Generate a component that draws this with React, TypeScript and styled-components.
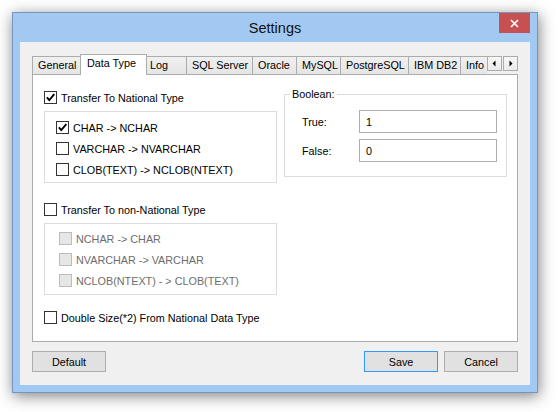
import React from 'react';
import styled, { createGlobalStyle, css } from 'styled-components';

const GlobalStyle = createGlobalStyle`
  html, body {
    margin: 0;
    padding: 0;
    background: #fff;
  }
  body {
    font-family: 'Liberation Sans', Arial, sans-serif;
    font-size: 10.8px;
    color: #000;
  }
  #root {
    width: 558px;
    height: 412px;
    overflow: hidden;
  }
`;

const Page = styled.div`
  padding: 12px 0 0 12px;
`;

const Window = styled.div`
  width: 526px;
  box-sizing: border-box;
  border: 1px solid #7596c0;
  background: #a2c9f2;
  padding: 0 7px 7px;
  box-shadow: 1px 3px 14px rgba(0, 0, 0, 0.5);
`;

const TitleBar = styled.div`
  display: grid;
  grid-template-columns: 1fr auto 1fr;
  height: 29px;
`;

const Title = styled.div`
  grid-column: 2;
  align-self: center;
  font-size: 14.5px;
  color: #111;
`;

const CloseButton = styled.div`
  grid-column: 3;
  justify-self: end;
  width: 31px;
  height: 20px;
  background: #c75050;
  display: flex;
  align-items: center;
  justify-content: center;
`;

const Client = styled.div`
  box-sizing: border-box;
  height: 343px;
  background: #f0f0f0;
  padding: 12px 12px 13px;
`;

const TabRow = styled.div`
  display: flex;
  height: 21px;
  position: relative;
  z-index: 1;
`;

const TabList = styled.div`
  width: 455px;
  flex: none;
  display: flex;
  align-items: flex-end;
  overflow: hidden;
`;

const Tab = styled.div<{ $width: number; $active?: boolean; $first?: boolean }>`
  box-sizing: border-box;
  flex: none;
  width: ${(p) => p.$width}px;
  height: 18px;
  margin-bottom: 1px;
  margin-left: ${(p) => (p.$first ? 0 : -1)}px;
  border: 1px solid #acacac;
  border-bottom: none;
  background: linear-gradient(#f0f0f0, #e5e5e5);
  padding-left: 5px;
  line-height: 17px;
  white-space: nowrap;

  ${(p) =>
    p.$active &&
    css`
      position: relative;
      z-index: 1;
      width: ${p.$width + 4}px;
      height: 21px;
      margin-bottom: 0;
      margin-left: -3px;
      margin-right: -2px;
      background: #fff;
      padding-left: 6px;
    `}
`;

const Arrows = styled.div`
  display: flex;
  gap: 1px;
  margin-top: 2px;
  height: 15px;
`;

const ArrowButton = styled.div`
  box-sizing: border-box;
  width: 15px;
  height: 15px;
  border: 1px solid #acacac;
  background: linear-gradient(#f7f7f7, #ebebeb);
  display: flex;
  align-items: center;
  justify-content: center;
`;

const Panel = styled.div`
  box-sizing: border-box;
  height: 268px;
  margin-top: -1px;
  background: #fff;
  border: 1px solid #acacac;
  display: flex;
  align-items: flex-start;
  gap: 7px;
  padding-left: 11px;
`;

const LeftColumn = styled.div`
  width: 233px;
  flex: none;
  display: flex;
  flex-direction: column;
  padding-top: 14px;
`;

const CheckRow = styled.label<{ $height?: number; $top?: number; $disabled?: boolean }>`
  display: flex;
  align-items: center;
  gap: 4px;
  height: ${(p) => p.$height ?? 17}px;
  margin-top: ${(p) => p.$top ?? 0}px;
  color: ${(p) => (p.$disabled ? '#6d6d6d' : '#000')};
  white-space: nowrap;
`;

const Box = styled.span<{ $disabled?: boolean }>`
  box-sizing: border-box;
  flex: none;
  width: 13px;
  height: 13px;
  border: 1px solid ${(p) => (p.$disabled ? '#bcbcbc' : '#333')};
  background: ${(p) => (p.$disabled ? '#e6e6e6' : '#fff')};
  display: flex;
  align-items: center;
  justify-content: center;
`;

const Group = styled.div<{ $padTop: number; $padLeft: number; $padBottom: number }>`
  margin-top: 5px;
  border: 1px solid #dcdcdc;
  padding: ${(p) => `${p.$padTop}px 0 ${p.$padBottom}px ${p.$padLeft}px`};
  display: flex;
  flex-direction: column;
`;

const Fieldset = styled.fieldset`
  width: 223px;
  box-sizing: border-box;
  flex: none;
  margin: 12px 0 0;
  padding: 0;
  border: 1px solid #dcdcdc;
  min-inline-size: 0;
`;

const Legend = styled.legend`
  margin-left: 5px;
  padding: 0 2px;
  line-height: 14px;
`;

const FieldGrid = styled.div`
  display: grid;
  grid-template-columns: 57px 138px;
  row-gap: 6px;
  align-items: center;
  padding: 9px 9px 14px 17px;
`;

const Input = styled.input`
  box-sizing: border-box;
  width: 138px;
  height: 23px;
  border: 1px solid #abadb3;
  padding: 0 6px;
  margin: 0;
  font: inherit;
  color: #000;
  background: #fff;
  outline: none;
`;

const ButtonRow = styled.div`
  display: flex;
  gap: 6px;
  margin-top: 9px;
`;

const Button = styled.button<{ $primary?: boolean; $push?: boolean }>`
  box-sizing: border-box;
  width: 74px;
  height: 21px;
  padding: 0;
  margin: 0 0 0 ${(p) => (p.$push ? 'auto' : '0')};
  border: 1px solid ${(p) => (p.$primary ? '#3399ff' : '#adadad')};
  background: #e1e1e1;
  font: inherit;
  color: #000;
`;

const tabs = [
  { label: 'General', width: 51 },
  { label: 'Data Type', width: 63, active: true },
  { label: 'Log', width: 43 },
  { label: 'SQL Server', width: 67 },
  { label: 'Oracle', width: 45 },
  { label: 'MySQL', width: 45 },
  { label: 'PostgreSQL', width: 69 },
  { label: 'IBM DB2', width: 53 },
  { label: 'Info', width: 41 },
];

const Check = ({ checked, disabled }: { checked?: boolean; disabled?: boolean }) => (
  <Box $disabled={disabled}>
    {checked ? (
      <svg width="11" height="11" viewBox="0 0 11 11">
        <path d="M1.8 5.4 L4.3 8 L9.3 2.2" fill="none" stroke="#000" strokeWidth="1.9" />
      </svg>
    ) : null}
  </Box>
);

const App = () => (
  <>
    <GlobalStyle />
    <Page>
      <Window>
        <TitleBar>
          <Title>Settings</Title>
          <CloseButton>
            <svg width="9" height="9" viewBox="0 0 9 9">
              <path d="M1 1 L8 8 M8 1 L1 8" stroke="#fff" strokeWidth="1.7" />
            </svg>
          </CloseButton>
        </TitleBar>
        <Client>
          <TabRow>
            <TabList>
              {tabs.map((t, i) => (
                <Tab key={t.label} $width={t.width} $active={t.active} $first={i === 0}>
                  {t.label}
                </Tab>
              ))}
            </TabList>
            <Arrows>
              <ArrowButton>
                <svg width="13" height="13" viewBox="0 0 13 13">
                  <polygon points="4.5,6.5 7.5,3.5 7.5,9.5" fill="#000" />
                </svg>
              </ArrowButton>
              <ArrowButton>
                <svg width="13" height="13" viewBox="0 0 13 13">
                  <polygon points="5.5,3.5 8.5,6.5 5.5,9.5" fill="#000" />
                </svg>
              </ArrowButton>
            </Arrows>
          </TabRow>
          <Panel>
            <LeftColumn>
              <CheckRow>
                <Check checked />
                Transfer To National Type
              </CheckRow>
              <Group $padTop={5} $padLeft={11} $padBottom={2}>
                <CheckRow $height={21}>
                  <Check checked />
                  CHAR -&gt; NCHAR
                </CheckRow>
                <CheckRow $height={21}>
                  <Check />
                  VARCHAR -&gt; NVARCHAR
                </CheckRow>
                <CheckRow $height={21}>
                  <Check />
                  CLOB(TEXT) -&gt; NCLOB(NTEXT)
                </CheckRow>
              </Group>
              <CheckRow $top={18}>
                <Check />
                Transfer To non-National Type
              </CheckRow>
              <Group $padTop={4} $padLeft={14} $padBottom={3}>
                <CheckRow $height={21} $disabled>
                  <Check disabled />
                  NCHAR -&gt; CHAR
                </CheckRow>
                <CheckRow $height={21} $disabled>
                  <Check disabled />
                  NVARCHAR -&gt; VARCHAR
                </CheckRow>
                <CheckRow $height={21} $disabled>
                  <Check disabled />
                  NCLOB(NTEXT) - &gt; CLOB(TEXT)
                </CheckRow>
              </Group>
              <CheckRow $top={14}>
                <Check />
                Double Size(*2) From National Data Type
              </CheckRow>
            </LeftColumn>
            <Fieldset>
              <Legend>Boolean:</Legend>
              <FieldGrid>
                <span>True:</span>
                <Input defaultValue="1" />
                <span>False:</span>
                <Input defaultValue="0" />
              </FieldGrid>
            </Fieldset>
          </Panel>
          <ButtonRow>
            <Button>Default</Button>
            <Button $primary $push>
              Save
            </Button>
            <Button>Cancel</Button>
          </ButtonRow>
        </Client>
      </Window>
    </Page>
  </>
);

export default App;
